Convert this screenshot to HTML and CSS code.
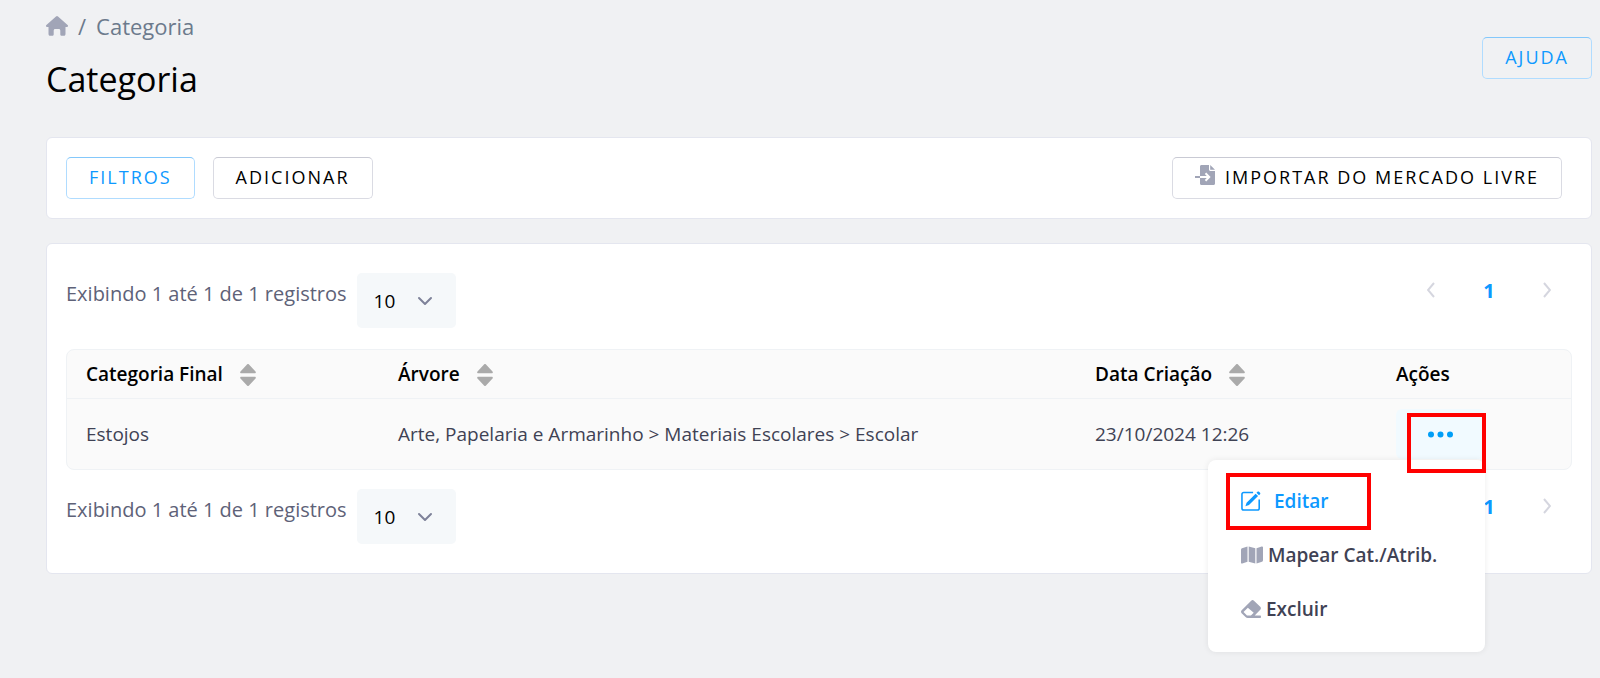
FILE: index.html
```html
<!DOCTYPE html>
<html lang="pt-BR">
<head>
  <meta charset="UTF-8">
  <meta name="viewport" content="width=device-width, initial-scale=1">
  <title>Categoria</title>
  <link rel="stylesheet" href="styles.css">
</head>
<body>
  <svg class="sprite" aria-hidden="true">
    <symbol id="sort" viewBox="0 0 16 22">
      <path d="M7 .4a1.400 1.400 0 0 1 2 0l6.500 7c.8.900.2 1.900-.8 1.900H1.300C.3 9.300-.3 8.300.5 7.400zM7 21.600a1.400 1.400 0 0 0 2 0l6.500-7c.8-.9.2-1.900-.8-1.900H1.300c-1 0-1.600 1-.8 1.900z"/>
    </symbol>
    <symbol id="prev" viewBox="0 0 8 16">
      <path d="M7 1 1 8l6 7"/>
    </symbol>
    <symbol id="next" viewBox="0 0 8 16">
      <path d="m1 1 6 7-6 7"/>
    </symbol>
  </svg>

  <header class="page-header">
    <div>
      <nav class="breadcrumb" aria-label="Navegação">
        <a href="#" aria-label="Início">
          <svg class="icon-home" viewBox="0 0 22 20"><path d="M10 .5a1.500 1.500 0 0 1 2 0l9.600 8.600c.8.800.4 1.800-.7 1.800h-1.400v7c0 1.200-.8 1.900-1.900 1.900h-1.700c-.9 0-1.600-.6-1.600-1.600v-3.500c0-1-.6-1.600-1.500-1.600H9.200c-.9 0-1.500.6-1.500 1.600v3.500c0 1-.7 1.600-1.600 1.600H4.400c-1.100 0-1.900-.7-1.900-1.900v-7H1.100C0 10.900-.4 9.900.4 9.100z"/></svg>
        </a>
        <span>/</span>
        <span>Categoria</span>
      </nav>
      <h1>Categoria</h1>
    </div>
    <button type="button" class="btn btn-primary">Ajuda</button>
  </header>

  <main>
    <section class="card toolbar">
      <button type="button" class="btn btn-primary">Filtros</button>
      <button type="button" class="btn">Adicionar</button>
      <button type="button" class="btn btn-import">
        <svg class="icon-import" viewBox="0 0 20 20">
          <path d="M6.500 0H14v4.500c0 .8.700 1.500 1.500 1.500H20v12.500c0 .9-.6 1.500-1.500 1.500h-12c-.9 0-1.500-.6-1.500-1.500v-17C5 .600 5.600 0 6.500 0zM15.200 0 20 4.800h-4.800z"/>
          <path class="arrow-tail" d="M0 12h5"/>
          <path class="arrow" d="M5 12h9M10.500 8.300l3.700 3.700-3.700 3.700"/>
        </svg>
        Importar do Mercado Livre
      </button>
    </section>

    <section class="card listing">
      <div class="list-bar">
        <label for="qtdTopo">Exibindo 1 até 1 de 1 registros</label>
        <select id="qtdTopo">
          <option>10</option>
          <option>25</option>
          <option>50</option>
        </select>
        <nav class="pager" aria-label="Paginação">
          <button type="button" aria-label="Anterior"><svg><use href="#prev"/></svg></button>
          <button type="button" class="current">1</button>
          <button type="button" aria-label="Próxima"><svg><use href="#next"/></svg></button>
        </nav>
      </div>

      <table>
        <thead>
          <tr>
            <th class="col-cat">Categoria Final <svg class="icon-sort"><use href="#sort"/></svg></th>
            <th class="col-tree">Árvore <svg class="icon-sort"><use href="#sort"/></svg></th>
            <th class="col-date">Data Criação <svg class="icon-sort"><use href="#sort"/></svg></th>
            <th>Ações</th>
          </tr>
        </thead>
        <tbody>
          <tr>
            <td>Estojos</td>
            <td>Arte, Papelaria e Armarinho &gt; Materiais Escolares &gt; Escolar</td>
            <td>23/10/2024 12:26</td>
            <td>
              <div class="actions">
                <button type="button" class="btn-dots" aria-label="Ações">
                  <svg viewBox="0 0 25 7"><circle cx="3" cy="3.500" r="3"/><circle cx="12.500" cy="3.500" r="3"/><circle cx="22" cy="3.500" r="3"/></svg>
                </button>
                <div class="menu">
                  <a href="#" class="menu-edit">
                    <svg viewBox="0 0 19 19"><path class="line" d="M11.500 1.500H2.600c-1 0-1.700.7-1.700 1.700v13.100c0 1 .7 1.700 1.700 1.700h13c1 0 1.700-.7 1.700-1.700V8"/><path d="m5.300 11.100 8.600-8.600 2.300 2.300-8.600 8.600-3.400 1.100zM14.700 1.700l1-1c.4-.4 1-.4 1.400 0l1 1c.4.4.4 1 0 1.400l-1 1z"/></svg>
                    Editar
                  </a>
                  <a href="#" class="menu-map">
                    <svg viewBox="0 0 22 17"><path d="M0 3.200c0-.7.400-1.200 1-1.400L6.500 0v15.300L1.300 17c-.7.200-1.300-.1-1.300-.8zM7.700 0l6.600 1.700V17l-6.600-1.700zM15.500 1.700 20.700 0c.7-.2 1.300.1 1.300.8v13c0 .7-.4 1.200-1 1.400L15.500 17z"/></svg>
                    Mapear Cat./Atrib.
                  </a>
                  <a href="#" class="menu-delete">
                    <svg viewBox="0 0 19 17"><path fill-rule="evenodd" d="M9.700.6c.8-.8 1.800-.8 2.600 0l6 5.800c.8.800.8 1.900 0 2.700L13 14.600h5c.7 0 1 .5 1 1.200s-.3 1.200-1 1.200H6.500c-.9 0-1.600-.3-2.200-.9L.6 12.500c-.8-.8-.8-1.900 0-2.700zM6.500 7.400l-4.100 4 3.300 3.200h3.700l2.700-2.600z"/></svg>
                    Excluir
                  </a>
                  <span class="mark mark-edit"></span>
                </div>
                <span class="mark mark-dots"></span>
              </div>
            </td>
          </tr>
        </tbody>
      </table>

      <div class="list-bar">
        <label for="qtdRodape">Exibindo 1 até 1 de 1 registros</label>
        <select id="qtdRodape">
          <option>10</option>
          <option>25</option>
          <option>50</option>
        </select>
        <nav class="pager" aria-label="Paginação">
          <button type="button" aria-label="Anterior"><svg><use href="#prev"/></svg></button>
          <button type="button" class="current">1</button>
          <button type="button" aria-label="Próxima"><svg><use href="#next"/></svg></button>
        </nav>
      </div>
    </section>
  </main>
</body>
</html>
```

FILE: styles.css
```css
* {
  box-sizing: border-box;
}
body {
  min-height: 100vh;
  margin: 0;
  padding: 11px 8px 24px 46px;
  background-color: #f0f1f3;
  font-family: "Open Sans", sans-serif;
  font-size: 20px;
  color: #3f4254;
}
button, select {
  font-family: inherit;
  cursor: pointer;
}
.sprite {
  display: none;
}

/* header */
.page-header {
  display: flex;
  justify-content: space-between;
  align-items: flex-start;
  height: 126px;
}
.page-header .btn {
  margin-top: 26px;
}
.breadcrumb {
  display: flex;
  align-items: center;
  gap: 10px;
  font-size: 22px;
  line-height: 30px;
  color: #6c7a8c;
}
.breadcrumb a {
  display: flex;
}
.icon-home {
  width: 22px;
  height: 20px;
  fill: #a1a5b7;
}
h1 {
  margin: 14px 0 0;
  font-size: 34px;
  font-weight: 400;
  line-height: 48px;
  color: #000;
}

/* buttons */
.btn {
  height: 42px;
  padding: 0 22px 2px;
  border: 1px solid #dadbe3;
  border-top-color: #c9cad4;
  border-radius: 5px;
  background: transparent;
  color: #000;
  font-size: 18px;
  letter-spacing: 2px;
  text-transform: uppercase;
}
.btn-primary {
  border-color: #b0dcff;
  border-top-color: #84c8fb;
  color: #0d99ff;
}
.btn-import {
  display: flex;
  align-items: center;
  gap: 10px;
  margin-left: auto;
}
.icon-import {
  width: 20px;
  height: 20px;
  margin-bottom: 4px;
  fill: #a1a5b7;
}
.icon-import .arrow-tail,
.icon-import .arrow {
  fill: none;
  stroke: #a1a5b7;
  stroke-width: 2;
}
.icon-import .arrow {
  stroke: #fff;
}

/* cards */
.card {
  background-color: #fff;
  border: 1px solid #e4e6ef;
  border-radius: 6px;
}
.toolbar {
  display: flex;
  gap: 18px;
  padding: 19px 29px 19px 19px;
}
.listing {
  margin-top: 24px;
  padding: 29px 19px;
}

.list-bar {
  display: flex;
  align-items: flex-start;
  gap: 10px;
}
.list-bar label {
  line-height: 42px;
  color: #5e6278;
}
.list-bar select {
  width: 99px;
  height: 55px;
  padding: 0 17px;
  border: none;
  border-radius: 5px;
  appearance: none;
  background: #f5f8fa url("data:image/svg+xml,%3Csvg xmlns='http://www.w3.org/2000/svg' viewBox='0 0 16 10' fill='none' stroke='%237e8299' stroke-width='2' stroke-linecap='round' stroke-linejoin='round'%3E%3Cpath d='M2 2l6 6 6-6'/%3E%3C/svg%3E") no-repeat right 23px center / 16px 10px;
  color: #000;
  font-size: 19px;
}
.pager {
  display: flex;
  margin: -6px -4px 0 auto;
}
.pager button {
  display: flex;
  align-items: center;
  justify-content: center;
  width: 58px;
  height: 46px;
  padding: 0;
  border: none;
  background: none;
}
.pager svg {
  width: 8px;
  height: 16px;
  fill: none;
  stroke: #d5d6df;
  stroke-width: 2;
}
.pager .current {
  color: #0d99ff;
  font-size: 20px;
  font-weight: 700;
}

/* table */
table {
  width: 100%;
  margin: 21px 0 19px;
  table-layout: fixed;
  border: 1px solid #eff2f5;
  border-radius: 8px;
  border-spacing: 0;
  background-color: #fafafa;
}
th, td {
  padding: 0 0 0 19px;
  text-align: left;
}
th {
  height: 49px;
  border-bottom: 1px solid #eff2f5;
  color: #000;
  font-size: 19px;
  font-weight: 600;
}
td {
  height: 70px;
  font-size: 19px;
}
.col-cat {
  width: 312px;
}
.col-tree {
  width: 697px;
}
.col-date {
  width: 301px;
}
.icon-sort {
  width: 16px;
  height: 22px;
  margin-left: 12px;
  vertical-align: -5px;
  fill: #aaa;
}

/* row menu */
.actions {
  position: relative;
  width: 89px;
}
.btn-dots {
  display: flex;
  align-items: center;
  justify-content: center;
  width: 100%;
  height: 50px;
  border: none;
  border-radius: 6px;
  background-color: #f1faff;
}
.btn-dots svg {
  width: 25px;
  height: 7px;
  fill: #009ef7;
}
.menu {
  position: absolute;
  top: 100%;
  right: 0;
  z-index: 1;
  display: flex;
  flex-direction: column;
  width: 277px;
  margin-top: 1px;
  padding: 14px 33px 16px;
  border-radius: 8px;
  background-color: #fff;
  box-shadow: 0 0 6px rgba(0, 0, 0, 0.08);
}
.menu a {
  display: flex;
  align-items: center;
  gap: 5px;
  height: 54px;
  color: #3f4254;
  font-weight: 600;
  text-decoration: none;
  white-space: nowrap;
}
.menu svg {
  width: 20px;
  height: 18px;
  fill: #a1a5b7;
}
.menu .menu-edit {
  gap: 13px;
  color: #0d99ff;
}
.menu .menu-edit svg {
  height: 20px;
  fill: #0d99ff;
}
.menu-edit .line {
  fill: none;
  stroke: #0d99ff;
  stroke-width: 1.5;
}
.menu .menu-map svg {
  width: 22px;
}

/* highlight boxes */
.mark {
  position: absolute;
  border: 4px solid #f00;
  pointer-events: none;
}
.mark-edit {
  top: 13px;
  left: 18px;
  width: 145px;
  height: 57px;
}
.mark-dots {
  top: 4px;
  left: 11px;
  z-index: 2;
  width: 79px;
  height: 60px;
}
```
